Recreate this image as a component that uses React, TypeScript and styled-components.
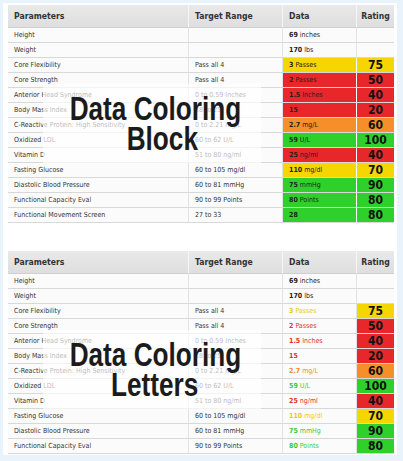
import React from "react";
import styled, { createGlobalStyle } from "styled-components";

const GlobalStyle = createGlobalStyle`
  html, body { margin: 0; padding: 0; }
  body {
    background: #e8f3fb;
    font-family: "DejaVu Sans Condensed", "DejaVu Sans", sans-serif;
    width: 403px;
    height: 461px;
    overflow: hidden;
  }
`;

type Tone = "yellow" | "red" | "orange" | "green" | null;

interface Row {
  param: string;
  target: string;
  num: string;
  unit: string;
  tone: Tone;
  rating: string;
}

const blockColors: Record<string, string> = {
  yellow: "#f5d600",
  red: "#e8272b",
  orange: "#f68e2a",
  green: "#2fd02b",
};

const textColors: Record<string, string> = {
  yellow: "#ecc91a",
  red: "#e2302f",
  orange: "#f08a34",
  green: "#3cc93a",
};

const allRows: Row[] = [
  { param: "Height", target: "", num: "69", unit: " inches", tone: null, rating: "" },
  { param: "Weight", target: "", num: "170", unit: " lbs", tone: null, rating: "" },
  { param: "Core Flexibility", target: "Pass all 4", num: "3", unit: " Passes", tone: "yellow", rating: "75" },
  { param: "Core Strength", target: "Pass all 4", num: "2", unit: " Passes", tone: "red", rating: "50" },
  { param: "Anterior Head Syndrome", target: "0 to 0.59 Inches", num: "1.5", unit: " Inches", tone: "red", rating: "40" },
  { param: "Body Mass Index", target: "18 to 25", num: "15", unit: "", tone: "red", rating: "20" },
  { param: "C-Reactive Protein: High Sensitivity", target: "0 to 2.21 mg/L", num: "2.7", unit: " mg/L", tone: "orange", rating: "60" },
  { param: "Oxidized LDL", target: "60 to 62 U/L", num: "59", unit: " U/L", tone: "green", rating: "100" },
  { param: "Vitamin D", target: "51 to 80 ng/ml", num: "25", unit: " ng/ml", tone: "red", rating: "40" },
  { param: "Fasting Glucose", target: "60 to 105 mg/dl", num: "110", unit: " mg/dl", tone: "yellow", rating: "70" },
  { param: "Diastolic Blood Pressure", target: "60 to 81 mmHg", num: "75", unit: " mmHg", tone: "green", rating: "90" },
  { param: "Functional Capacity Eval", target: "90 to 99 Points", num: "80", unit: " Points", tone: "green", rating: "80" },
  { param: "Functional Movement Screen", target: "27 to 33", num: "28", unit: "", tone: "green", rating: "80" },
];

const Panel = styled.div`
  margin: 3px 0 0 3px;
  width: 394px;
  height: 452px;
  background: #ffffff;
  box-sizing: border-box;
  padding: 2px 3px 0 5px;
  display: flex;
  flex-direction: column;
  gap: 28px;
  overflow: hidden;
`;

const TableWrap = styled.div`
  position: relative;
  flex: none;
`;

const Grid = styled.div`
  display: grid;
  grid-template-columns: 181px 94px 74px 37px;
  grid-template-rows: 23px;
  grid-auto-rows: 15px;
`;

const HeadCell = styled.div<{ $center?: boolean }>`
  box-sizing: border-box;
  background: linear-gradient(#e9e9e9, #dedede);
  border-right: 1px solid #f6f6f6;
  border-bottom: 1px solid #cfcfcf;
  display: flex;
  align-items: center;
  justify-content: ${(p) => (p.$center ? "center" : "flex-start")};
  padding-left: ${(p) => (p.$center ? "0" : "6px")};
  font-weight: bold;
  font-size: 8.6px;
  color: #333;
  &:last-child { border-right: none; }
`;

const HeadRow = styled.div`
  display: contents;
`;

const Cell = styled.div<{ $bg?: string }>`
  box-sizing: border-box;
  border-bottom: 1px solid #d8d8d8;
  border-right: 1px solid ${(p) => (p.$bg ? "#ffffff" : "#e2e2e2")};
  background: ${(p) => p.$bg || "#fbfbfb"};
  padding-left: 6px;
  font-size: 7px;
  line-height: 14px;
  color: #333;
  white-space: pre;
  overflow: hidden;
`;

const DataCell = styled(Cell)<{ $fg?: string }>`
  color: ${(p) => p.$fg || "#222"};
  b { font-weight: bold; }
`;

const RatingCell = styled(Cell)`
  text-align: center;
  padding-left: 0;
  border-right: none;
  font-weight: bold;
  font-size: 12px;
  line-height: 15px;
  color: #111;
`;

const Shade = styled.div`
  position: absolute;
  left: 35px;
  top: 79px;
  width: 218px;
  height: 79px;
  background: rgba(255, 255, 255, 0.66);
`;

const Caption = styled.div<{ $top: number }>`
  position: absolute;
  left: 27px;
  width: 240px;
  top: ${(p) => p.$top}px;
  font-family: "Liberation Sans", Arial, sans-serif;
  font-weight: bold;
  font-size: 34px;
  line-height: 30px;
  color: #1b1b1b;
  display: flex;
  flex-direction: column;
  align-items: center;
`;

const Line = styled.div<{ $shift?: number }>`
  white-space: nowrap;
  transform: translateX(${(p) => p.$shift || 0}px) scaleX(0.77);
  transform-origin: center;
`;

function DataTable({
  rows,
  mode,
  label,
  shift,
}: {
  rows: Row[];
  mode: "block" | "letters";
  label: string;
  shift: number;
}) {
  return (
    <TableWrap>
      <Grid>
        <HeadRow>
          <HeadCell>Parameters</HeadCell>
          <HeadCell>Target Range</HeadCell>
          <HeadCell>Data</HeadCell>
          <HeadCell $center>Rating</HeadCell>
        </HeadRow>
        {rows.map((r) => {
          const blk = r.tone ? blockColors[r.tone] : undefined;
          const fg = r.tone && mode === "letters" ? textColors[r.tone] : undefined;
          return (
            <React.Fragment key={r.param}>
              <Cell>{r.param}</Cell>
              <Cell>{r.target}</Cell>
              <DataCell $bg={mode === "block" ? blk : undefined} $fg={fg}>
                <b>{r.num}</b>
                {r.unit}
              </DataCell>
              <RatingCell $bg={blk}>{r.rating}</RatingCell>
            </React.Fragment>
          );
        })}
      </Grid>
      <Shade />
      <Caption $top={88}>
        <Line>Data Coloring</Line>
        <Line $shift={shift}>{label}</Line>
      </Caption>
    </TableWrap>
  );
}

export default function App() {
  return (
    <>
      <GlobalStyle />
      <Panel>
        <DataTable rows={allRows} mode="block" label="Block" shift={7} />
        <DataTable rows={allRows.slice(0, 12)} mode="letters" label="Letters" shift={0} />
      </Panel>
    </>
  );
}
